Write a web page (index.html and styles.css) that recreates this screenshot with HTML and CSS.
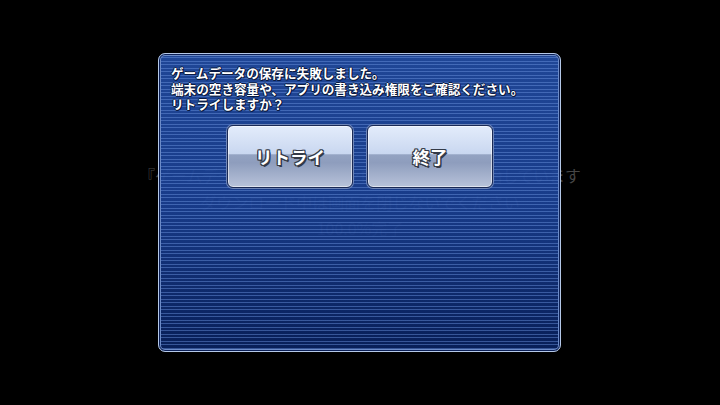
FILE: index.html
```html
<!DOCTYPE html>
<html lang="ja">
<head>
<meta charset="utf-8">
<link rel="stylesheet" href="styles.css">
</head>
<body>
<div class="screen">
  <div class="ghost">
    <p class="ghost-line">『ゲームデータ』の追加ダウンロードを自動で開始しています</p>
    <p class="ghost-line">ダウンロード中は画面を閉じないでください</p>
    <p class="ghost-line">100.0%完了</p>
  </div>
  <div class="dialog">
    <p class="message">ゲームデータの保存に失敗しました。<br>端末の空き容量や、アプリの書き込み権限をご確認ください。<br>リトライしますか？</p>
    <div class="buttons">
      <button class="btn">リトライ</button>
      <button class="btn">終了</button>
    </div>
  </div>
</div>
</body>
</html>
```
FILE: styles.css
```css
html, body {
  margin: 0;
  padding: 0;
  background: #000;
}
.screen {
  position: relative;
  width: 720px;
  height: 405px;
  overflow: hidden;
  font-family: "Noto Sans CJK JP", "Noto Sans", sans-serif;
}
.ghost {
  padding-top: 163px;
  text-align: center;
  color: #464646;
}
.ghost-line {
  margin: 0;
  font-size: 16px;
  line-height: 26px;
  white-space: nowrap;
}
.ghost-line:first-child {
  font-size: 15.8px;
}
.dialog {
  position: absolute;
  left: 158px;
  top: 53px;
  width: 403px;
  height: 299px;
  box-sizing: border-box;
  border-radius: 7px;
  border: 1px solid #b4c8e8;
  box-shadow: inset 0 0 0 1px #0b1f55, inset 0 0 0 2px #6d8cc8;
  background:
    repeating-linear-gradient(to bottom, rgba(110,150,225,0.45) 0 1px, rgba(0,0,0,0) 1px 3.5px),
    linear-gradient(to bottom, rgba(34,76,162,0.93) 0%, rgba(26,64,148,0.93) 50%, rgba(8,32,92,0.95) 100%);
  padding: 11px 12px 0 12px;
}
.message {
  margin: 0;
  color: #fff;
  font-size: 12.6px;
  line-height: 15.6px;
  font-weight: 700;
  white-space: nowrap;
  text-shadow: 1px 1px 0 #0a1a40, -1px 0 0 #0a1a40, 0 -1px 0 #0a1a40, 1px 0 0 #0a1a40, 0 1px 0 #0a1a40;
}
.buttons {
  display: flex;
  justify-content: center;
  gap: 14px;
  margin-top: 13px;
  padding-left: 1px;
}
.btn {
  width: 126px;
  height: 63px;
  box-sizing: border-box;
  border-radius: 6px;
  border: 1px solid #1b2a55;
  box-shadow: 0 0 0 1px #6f86b8, inset 0 0 0 1px rgba(255,255,255,0.55);
  background: linear-gradient(to bottom, #e3ecfb 0%, #c9d7f0 46%, #94a3c2 47%, #8e9dbd 60%, #b8c3da 100%);
  color: #fff;
  font-family: "Noto Sans CJK JP", sans-serif;
  font-size: 17.5px;
  font-weight: 700;
  padding: 0;
  text-shadow: 1.5px 1.5px 0 #333a48, -1px 0 0 #333a48, 0 -1px 0 #333a48, 1px 0 0 #333a48, 0 1px 0 #333a48, -1px -1px 0 #333a48, 1px -1px 0 #333a48, -1px 1px 0 #333a48;
}
```
